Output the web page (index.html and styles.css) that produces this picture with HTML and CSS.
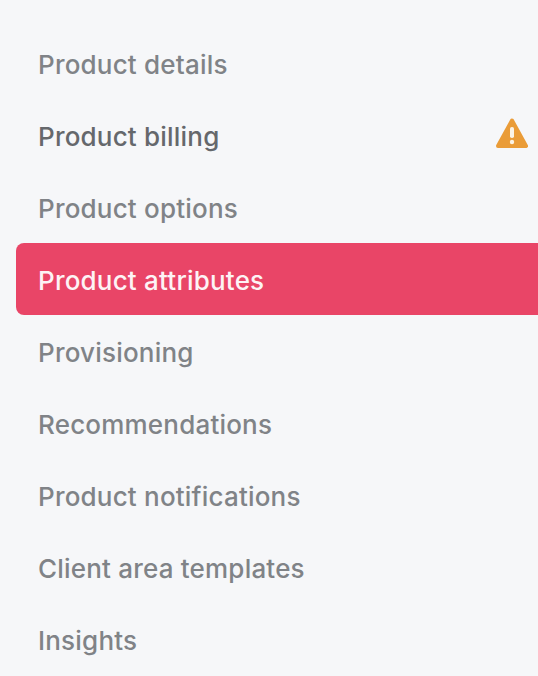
FILE: index.html
```html
<!DOCTYPE html>
<html lang="en">
<head>
    <meta charset="UTF-8">
    <meta name="viewport" content="width=device-width, initial-scale=1.0">
    <title>Product settings</title>
    <link rel="stylesheet" href="styles.css">
</head>
<body>
    <ul class="side-nav">
        <li class="nav-item">Product details</li>
        <li class="nav-item nav-warning">
            <span>Product billing</span>
            <svg class="warn-icon" viewBox="0 0 32 32" width="32" height="32">
                <path d="M16 3.5 L30 29 H2 Z" fill="#ea9c38" stroke="#ea9c38" stroke-width="4" stroke-linejoin="round"/>
                <rect x="14" y="10" width="4" height="11" rx="1.8" fill="#fbf3e6"/>
                <circle cx="16" cy="25" r="2.2" fill="#fbf3e6"/>
            </svg>
        </li>
        <li class="nav-item">Product options</li>
        <li class="nav-item nav-active">Product attributes</li>
        <li class="nav-item">Provisioning</li>
        <li class="nav-item">Recommendations</li>
        <li class="nav-item">Product notifications</li>
        <li class="nav-item">Client area templates</li>
        <li class="nav-item">Insights</li>
    </ul>
</body>
</html>
```

FILE: styles.css
```css
html, body {
    margin: 0;
    height: 100%;
    overflow: hidden;
}
body {
    font-family: Inter, "Liberation Sans", sans-serif;
    background-color: #f6f7f9;
}
.side-nav {
    list-style-type: none;
    margin: 0;
    padding: 27px 0 0 16px;
}
.nav-item {
    display: flex;
    justify-content: space-between;
    align-items: center;
    height: 72px;
    padding: 2px 10px 0 22px;
    font-size: 26px;
    font-weight: 500;
    letter-spacing: 0.2px;
    color: #808387;
    box-sizing: border-box;
}
.nav-warning {
    color: #65686c;
}
.nav-active {
    background-color: #e94567;
    color: #fdf3f5;
    border-radius: 8px 0 0 8px;
}
.warn-icon {
    display: block;
    margin-bottom: 6px;
}
```
